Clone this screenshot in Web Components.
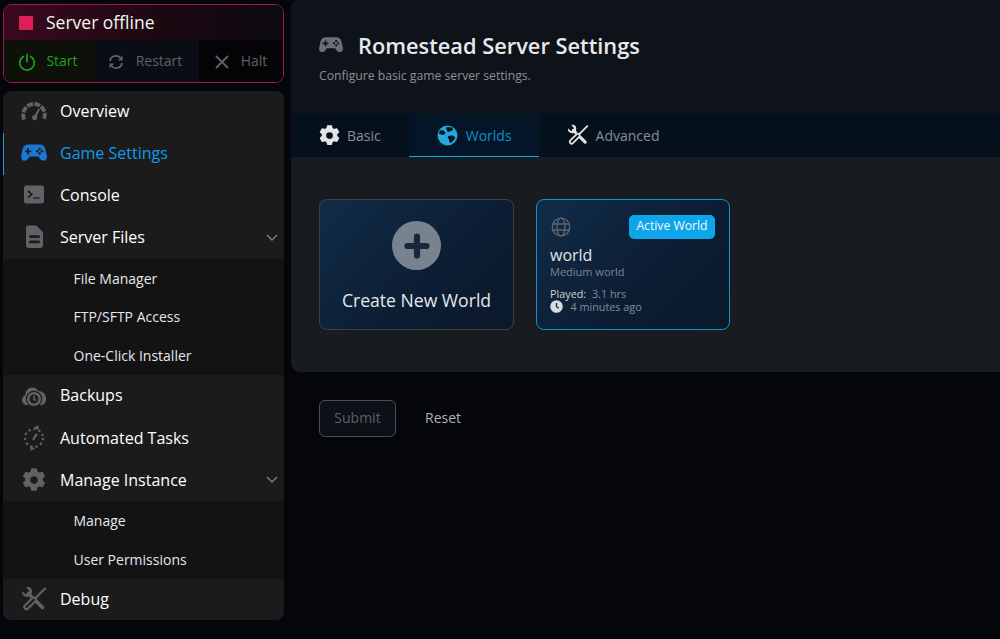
<!DOCTYPE html>
<html><head><meta charset="utf-8">
<style>
html,body{margin:0;height:639px;overflow:hidden;background:#04060b;font-family:"Open Sans",sans-serif;color:#fff}
body{display:flex;gap:7px;padding:4px 0 0 3px;box-sizing:border-box;width:1000px}
</style></head><body>
<div style="display:flex;flex-direction:column;gap:8px;width:281px;flex:none">
<status-card></status-card>
<side-nav>
<nav-item icon="gauge">Overview</nav-item>
<nav-item icon="gamepad" active>Game Settings</nav-item>
<nav-item icon="terminal">Console</nav-item>
<nav-item icon="file" chevron>Server Files</nav-item>
<nav-sub><sub-item>File Manager</sub-item><sub-item>FTP/SFTP Access</sub-item><sub-item>One-Click Installer</sub-item></nav-sub>
<nav-item icon="backup" tall>Backups</nav-item>
<nav-item icon="tasks" tall>Automated Tasks</nav-item>
<nav-item icon="gear" chevron tall>Manage Instance</nav-item>
<nav-sub style="--h:38.900px"><sub-item>Manage</sub-item><sub-item>User Permissions</sub-item></nav-sub>
<nav-item icon="tools" tall>Debug</nav-item>
</side-nav>
</div>
<settings-page></settings-page>
<script>
const I={
gauge:'<path fill="none" stroke="currentColor" stroke-width="3.800" stroke-dasharray="6 1.300" d="M3.300 21.500A10.800 10.800 0 1 1 22.700 21.500"/><path fill="currentColor" d="M17.500 10.500l1.500.9-3.300 6.600a2.600 2.600 0 1 1-2-1z"/>',
gamepad:'<path fill="currentColor" d="M7.600 4.500h10.800c3.400 0 5.300 1.800 6 4.700l1.400 6.600c.6 3-1 4.900-3.200 4.900-1.900 0-3-1.100-4-2.500l-1.200-1.700H8.600l-1.200 1.700c-1 1.400-2.100 2.500-4 2.500C1.200 20.700-.4 18.800.2 15.800l1.400-6.600c.7-2.900 2.600-4.700 6-4.700z"/><path fill="var(--cut,#1b1b1b)" d="M6.200 8.200h1.800v2.200h2.200v1.800H8v2.200H6.200v-2.200H4v-1.800h2.200z"/><circle cx="18.600" cy="8.900" r="1.250" fill="var(--cut,#1b1b1b)"/><circle cx="18.600" cy="13.500" r="1.250" fill="var(--cut,#1b1b1b)"/><circle cx="16.300" cy="11.200" r="1.250" fill="var(--cut,#1b1b1b)"/><circle cx="20.900" cy="11.200" r="1.250" fill="var(--cut,#1b1b1b)"/>',
terminal:'<rect x="3" y="3.500" width="20" height="18" rx="2.500" fill="currentColor"/><path d="M7 9l3.800 3.300L7 15.600" fill="none" stroke="#1b1b1b" stroke-width="1.700"/><path d="M12.500 16h6" stroke="#1b1b1b" stroke-width="1.700"/>',
file:'<path fill="currentColor" d="M7.500 1.500h7.700L22 8.300V21a3 3 0 0 1-3 3H8a3 3 0 0 1-3-3V4a2.500 2.500 0 0 1 2.500-2.500z"/><rect x="8" y="11.300" width="11" height="2.600" rx="1.300" fill="#1b1b1b"/><rect x="8" y="16.600" width="11" height="2.600" rx="1.300" fill="#1b1b1b"/>',
backup:'<path fill="currentColor" d="M6 23C2.800 23 1 20.700 1 18c0-2.300 1.300-4.100 3.300-4.900C4.400 8.900 7.400 5.600 11.300 5.600c2.500 0 4.700 1.200 6 3.300 4-.2 7.300 2.800 7.700 6.800.6 4-2 7.300-5 7.300z"/><circle cx="13" cy="17" r="8.200" fill="#1b1b1b"/><circle cx="13" cy="17" r="5.800" fill="none" stroke="currentColor" stroke-width="2.500"/><path d="M13 13.800v3.500l2.200 1.400" fill="none" stroke="currentColor" stroke-width="1.600"/>',
tasks:'<circle cx="13" cy="13" r="9" fill="none" stroke="currentColor" stroke-width="2.300" stroke-dasharray="2.200 3"/><path d="M15.800 8.800l-3.800 6" stroke="currentColor" stroke-width="2.200" fill="none"/><path fill="currentColor" d="M13 2.200l4.500-2v5zM14 23.800l-4.500 2v-5z"/>',
gear:'<path fill="currentColor" stroke="currentColor" stroke-width="1.400" stroke-linejoin="round" fill-rule="evenodd" d="M10.900 2h4.200l.8 3 2.300 1.300 3-.9 2.100 3.600-2.200 2.100v2.800l2.200 2.100-2.100 3.600-3-.9-2.300 1.300-.8 3h-4.200l-.8-3-2.300-1.300-3 .9-2.100-3.600 2.200-2.100v-2.800L2.700 9l2.100-3.600 3 .9L10.100 5zM13 8.500a4.500 4.500 0 1 0 0 9 4.500 4.500 0 0 0 0-9z"/>',
tools:'<g fill="none" stroke-linecap="round" stroke-linejoin="round"><path stroke="currentColor" stroke-width="3.600" d="M7.500 7.500L21.500 21.500"/><path fill="currentColor" stroke="none" d="M1.200 5.300L5 8.600 8.400 5 5.100 1.300C8.200.1 11.200 2.400 10.900 5.600l-.2 1.700L9 10.600 6.800 10.800C3.400 11.300.4 8.500 1.200 5.300z"/><path stroke="var(--cut,#1b1b1b)" stroke-width="5.800" d="M12.500 13.500L16 10"/><path stroke="currentColor" stroke-width="2.200" d="M24 2.500L13 13.500"/><path stroke="currentColor" stroke-width="6.400" d="M12.800 13.700L5.500 21"/><path stroke="var(--cut,#1b1b1b)" stroke-width="2.300" d="M12.800 13.700L5.500 21"/></g>'
};
const svg=(n,s=26)=>`<svg viewBox="0 0 26 26" width="${s}" height="${s}" style="display:block">${I[n]}</svg>`;
function def(name,css,html){customElements.define(name,class extends HTMLElement{connectedCallback(){if(this.shadowRoot)return;const r=this.attachShadow({mode:'open'});r.innerHTML='<style>'+css+'</style>'+(typeof html==='function'?html(this):html);}})}
def('status-card',`:host{display:block;height:79px;box-sizing:border-box;border:1px solid #a01a45;border-radius:9px;overflow:hidden;background:#0a0a0f}
.top{height:35px;display:flex;align-items:center;padding-left:15px;gap:13px;font-size:17.500px;background:linear-gradient(90deg,#3b0a1c,#1a0811 60%,#0c0a11);color:#f4f4f4}
.top span:last-child{margin-top:-1px}
.sq{width:14px;height:14px;background:#de1f55}
.btns{display:grid;grid-template-columns:90px 105px 1fr;height:43px;font-size:14px}
.b{display:flex;align-items:center;justify-content:center;gap:10px}
.b span{margin-top:-2px}
.s{background:#0d1109;color:#23a11f;padding-right:2px}.r{background:#0a0d13;color:#5d6065;gap:12px;padding-right:3px}.h{background:#040406;color:#5d6065;gap:12px}`,
`<div class="top"><span class="sq"></span><span>Server offline</span></div><div class="btns">
<div class="b s"><svg width="18" height="18" viewBox="0 0 18 18" fill="none" stroke="#23a11f" stroke-width="1.700" stroke-linecap="round"><path d="M9 1.500v7"/><path d="M5.300 3.500a7.300 7.300 0 1 0 7.400 0"/></svg><span>Start</span></div>
<div class="b r"><svg width="16" height="16" viewBox="0 0 16 16" fill="none" stroke="#5d6065" stroke-width="1.800"><path d="M2 7a6 6 0 0 1 10.500-3l1 1.300M14 9a6 6 0 0 1-10.500 3l-1-1.300"/><path fill="#5d6065" stroke="none" d="M14.500 1.500V6.500H9.800zM1.500 14.500V9.500H6.200z"/></svg><span>Restart</span></div>
<div class="b h"><svg width="14" height="14" viewBox="0 0 14 14" fill="none" stroke="#5d6065" stroke-width="2"><path d="M1 1l12 12M13 1L1 13"/></svg><span>Halt</span></div></div>`);
def('side-nav',`:host{display:block;height:529px;background:#1b1b1b;border-radius:8px;overflow:hidden}`,`<slot></slot>`);
customElements.define('nav-item',class extends HTMLElement{connectedCallback(){if(this.shadowRoot)return;const r=this.attachShadow({mode:'open'});const a=this.hasAttribute('active'),t=this.hasAttribute('tall'),n=this.getAttribute('icon');
r.innerHTML=`<style>:host{display:flex;align-items:center;box-sizing:border-box;height:42px;padding-bottom:${t?(n==='backup'||n==='tools'?0.6:0):2}px;position:relative;font-size:16px;color:${a?'#0f9be8':'#fff'}}
.i{width:26px;margin-left:18px;margin-right:13px;color:${a?'#1878d6':'#5f6368'}}
.bar{position:absolute;left:0;top:0;bottom:0;width:1px;background:#16a3df}
.c{position:absolute;right:6px;top:50%;margin-top:-4px}</style>${a?'<span class="bar"></span>':''}<span class="i">${svg(n)}</span><slot></slot>${this.hasAttribute('chevron')?'<svg class="c" width="12" height="8" viewBox="0 0 12 8" fill="none" stroke="#7d8084" stroke-width="1.400"><path d="M1 1l5 5 5-5"/></svg>':''}`}});
def('nav-sub',`:host{display:block;background:#131313}`,`<slot></slot>`);
def('sub-item',`:host{display:flex;align-items:center;height:var(--h,38.600px);padding-left:70.500px;font-size:14px;color:#e3e8ee}`,`<slot></slot>`);
def('world-card',`:host{display:block;width:195px;height:130.500px;box-sizing:border-box;border:1px solid #3e4247;border-radius:8px;background:linear-gradient(135deg,#112c48,#0c1d33 60%,#0a182a)}
.p{display:flex;flex-direction:column;align-items:center;height:100%}
.c{width:49px;height:49px;border-radius:50%;background:#79838f;margin-top:21px;display:flex;align-items:center;justify-content:center}
.t{font-size:17.600px;color:#e6e8ea;margin-top:18px;line-height:25px}`,
`<div class="p"><div class="c"><svg width="26" height="26" viewBox="0 0 26 26"><path d="M13 3.500v19M3.500 13h19" stroke="#17283c" stroke-width="6.200" stroke-linecap="round"/></svg></div><div class="t">Create New World</div></div>`);
def('active-card',`:host{display:block;width:194px;height:130.500px;box-sizing:border-box;border:1px solid #0f92cf;border-radius:8px;position:relative;padding:0 14px;background:linear-gradient(135deg,#112c48,#0c1d33 60%,#0a182a)}
.b{position:absolute;right:14px;top:14.500px;height:24px;width:86px;background:#0ea5e9;border-radius:5px;font-size:12.200px;line-height:22px;text-align:center;color:#f2f9fd}
.g{display:block;position:absolute;left:14px;top:17px}
.n{position:absolute;left:13px;top:44px;font-size:16px;font-weight:500;color:#e4e6e8;line-height:22px}
.m{position:absolute;left:13px;top:64px;font-size:11px;color:#7e858d;line-height:15px}
.d{position:absolute;left:13px;top:86.500px;font-size:10.800px;line-height:13.500px;color:#868c94}
.d b{font-weight:500;color:#d0d3d7;margin-right:3px}
.l{display:flex;align-items:center;gap:7.500px}`,
`<svg class="g" width="20" height="20" viewBox="0 0 20 20" fill="none" stroke="#5f656e" stroke-width="1.300"><circle cx="10" cy="10" r="8.800"/><ellipse cx="10" cy="10" rx="4" ry="8.800"/><path d="M1.700 7h16.600M1.700 13h16.600"/></svg><div class="b">Active World</div><div class="n">world</div><div class="m">Medium world</div><div class="d"><div><b>Played:</b> 3.1 hrs</div><div class="l"><svg width="13" height="13" viewBox="0 0 13 13"><circle cx="6.500" cy="6.500" r="6.300" fill="#d8dbde"/><path d="M6.500 3v3.700l2.300 1.500" stroke="#11263d" stroke-width="1.300" fill="none"/></svg>4 minutes ago</div></div>`);
def('tab-item',`:host{display:flex;align-items:center;gap:7px;height:43px;box-sizing:border-box;font-size:14px;color:#8b8e93;padding:0 28px 1px}
:host([active]){background:#031527;color:#0d8fd0;border-bottom:1px solid #0ea5e9;gap:8px;padding:0 27px 0 28px}`,`<slot></slot>`);
def('settings-page',`:host{display:block;flex:1;min-width:0}
.hd{margin-top:-4px;height:114px;box-sizing:border-box;background:#0e1219;padding:31px 28px 0;border-radius:8px 0 0 0}
.h{display:flex;align-items:center;gap:15px;height:28px}
h1{margin:0;font-size:21.800px;font-weight:600;color:#e8e9eb}
.hd p{margin:8px 0 0;font-size:12.200px;color:#8c9096}
.tabs{display:flex;height:43px;background:#04111c}
.panel{height:215px;background:#181c21;border-radius:0 0 0 9px;box-sizing:border-box;padding:42px 28px;display:flex;gap:22px}
.act{display:flex;align-items:center;gap:29px;padding:28px}
.sb{width:77px;height:37px;box-sizing:border-box;border:1px solid #4b4e53;border-radius:6px;background:#0c1017;color:#5c6066;font-size:14px;padding-bottom:2px;display:flex;align-items:center;justify-content:center}
.rs{font-size:14px;color:#a9b3bc;margin-top:-2px}`,
t=>`<div class="hd"><div class="h"><svg width="24" height="24" viewBox="0 0 26 26" style="--cut:#0e1219;color:#6a6e75">${I.gamepad}</svg><h1>Romestead Server Settings</h1></div><p>Configure basic game server settings.</p></div>
<div class="tabs"><tab-item><svg width="23" height="23" viewBox="0 0 26 26" style="color:#e4e4e4;margin-left:-1px;margin-right:-1px">${I.gear}</svg>Basic</tab-item>
<tab-item active><svg width="21" height="21" viewBox="0 0 20 20"><circle cx="10" cy="10" r="9.500" fill="#28a6dc"/><path fill="#031527" d="M3 5c2 0 3.500 0 4.500 1.500S7 9.500 5.500 9.500 3 8 1.500 8zM9 2c2 .5 5-.5 6 1.500s-2.500 2-3.500 3S8 4.500 9 2zM11 10.500c2-1 5-.5 6 1s-2.500 5-4 5.500-1-3-2-4-1-1.500 0-2.500z"/></svg>Worlds</tab-item>
<tab-item><svg width="22" height="22" viewBox="0 0 26 26" style="--cut:#04111c;color:#e4e4e4">${I.tools}</svg>Advanced</tab-item></div>
<div class="panel"><world-card></world-card><active-card></active-card></div>
<div class="act"><div class="sb">Submit</div><div class="rs">Reset</div></div>`);
</script>
</body></html>
